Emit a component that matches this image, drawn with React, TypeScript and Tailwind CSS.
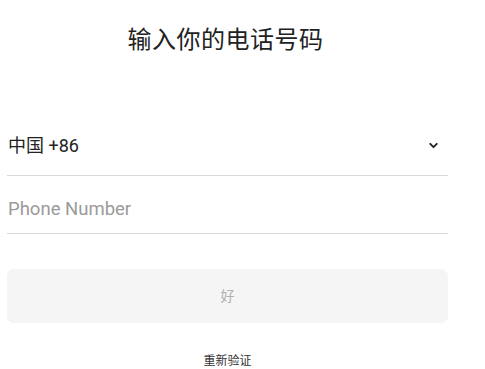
import React from 'react';
import { ChevronDown } from 'lucide-react';

export default function App() {
  return (
    <div
      className="w-[485px] h-[369px] bg-white overflow-hidden flex flex-col"
      style={{ fontFamily: 'Roboto, "Noto Sans CJK SC", sans-serif' }}
    >
      <h1 className="mt-[24px] pr-[34px] text-center text-[24px] leading-[32px] text-[#222] tracking-[0.5px]">
        输入你的电话号码
      </h1>

      <div className="mx-[7px] w-[441px] mt-[78px]">
        <div className="flex items-center justify-between h-[42px] pb-[18px] border-b border-[#d9d9d9] pl-[1px]">
          <span className="text-[18px] text-[#222]">中国 +86</span>
          <ChevronDown className="w-[13px] h-[13px] mr-[8px] text-[#222]" strokeWidth={3.5} />
        </div>
        <div className="flex items-center h-[58px] pt-[10px] border-b border-[#d9d9d9] pl-[1px]">
          <span className="text-[18.5px] text-[#9a9a9a]">Phone Number</span>
        </div>
        <button className="mt-[35px] w-full h-[54px] rounded-[7px] bg-[#f5f5f5] text-[14px] text-[#b0b0b0]">
          好
        </button>
        <div className="mt-[30px] flex justify-center">
          <span className="text-[12px] text-[#333] leading-[16px]">重新验证</span>
        </div>
      </div>
    </div>
  );
}
